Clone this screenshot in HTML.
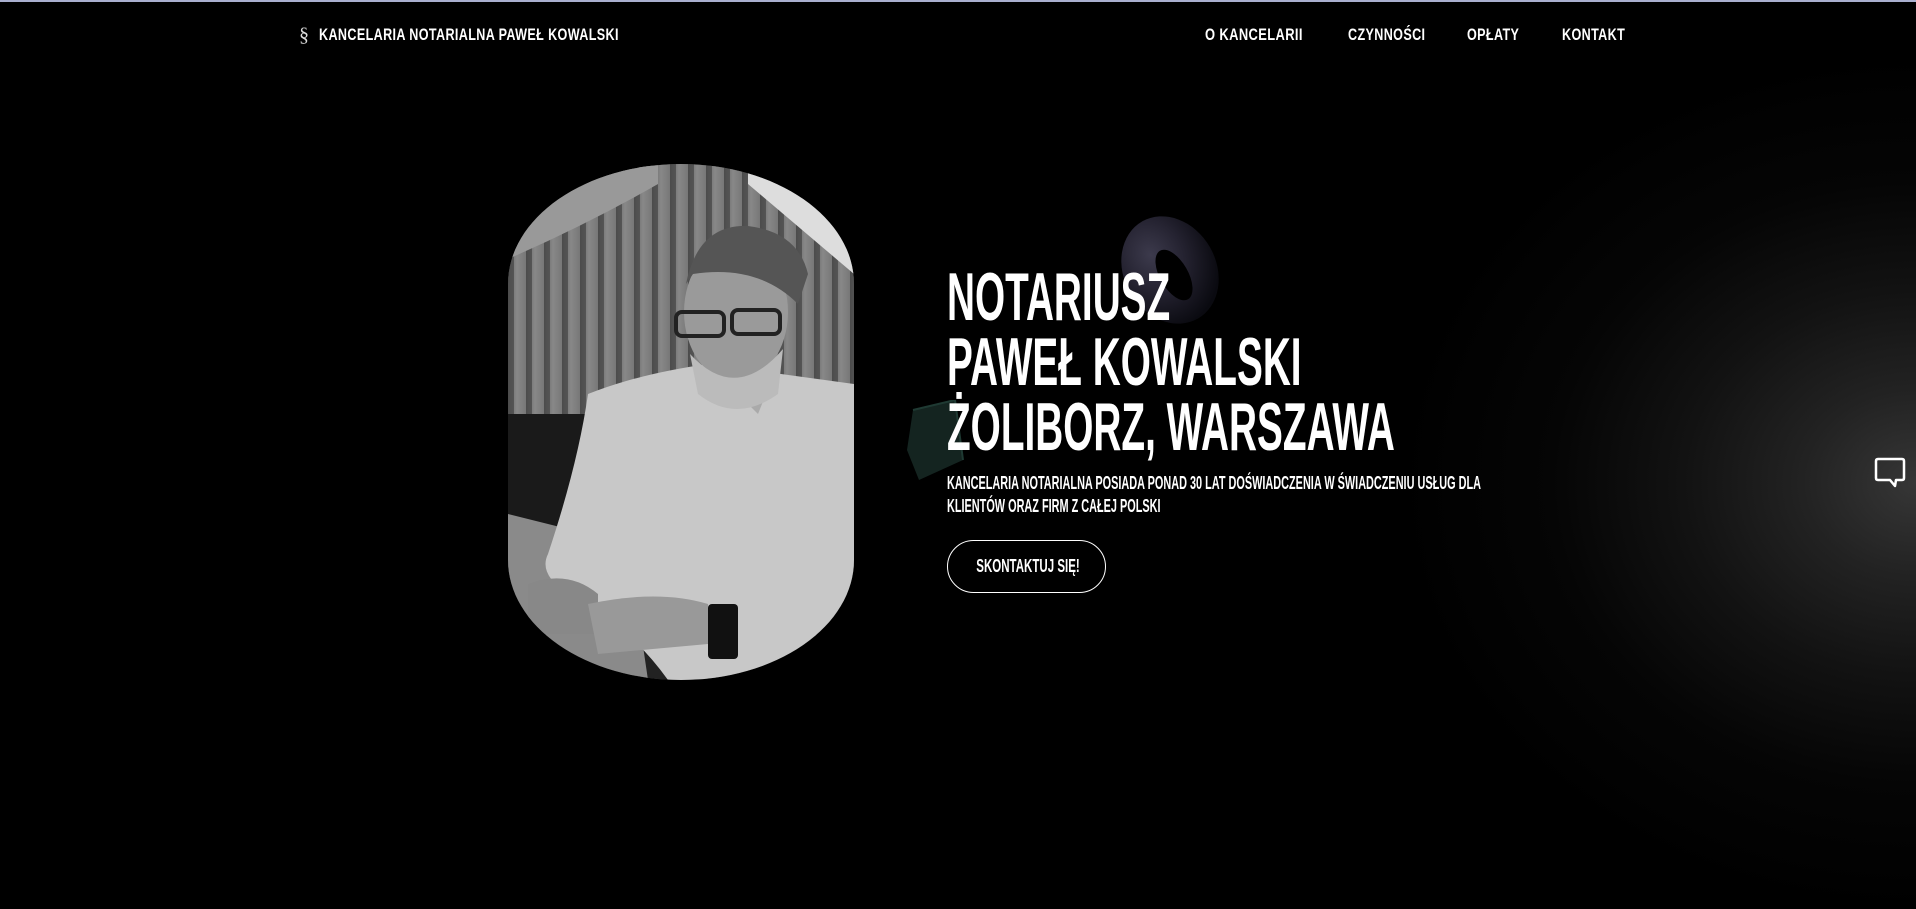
<!DOCTYPE html>
<html><head><meta charset="utf-8">
<style>
*{margin:0;padding:0;box-sizing:border-box}
html,body{width:1916px;height:909px;overflow:hidden;background:#000}
body{position:relative;font-family:"Liberation Sans Narrow","Liberation Sans",sans-serif;color:#fff}
.topline{position:absolute;left:0;top:0;width:1916px;height:2px;background:#a9afcf}
.glow{position:absolute;left:1400px;top:60px;width:1040px;height:850px;background:radial-gradient(ellipse 520px 430px at 516px 423px,#363636 0%,#222 22%,#121212 45%,#050505 70%,#000 100%)}
.n{position:absolute;white-space:nowrap;font-weight:bold;transform-origin:0 50%}
.logo{left:299px;top:24px;font-size:20px;font-family:"Liberation Serif",serif;font-weight:normal;color:#ddd}
.nav{top:25px;font-size:17px;letter-spacing:.5px}
.photo{position:absolute;left:508px;top:164px;width:346px;height:516px;border-radius:173px/120px;overflow:hidden;background:#555}
.title{position:absolute;left:947px;top:265px;font-size:68px;line-height:65px;font-weight:bold;transform:scaleX(.57);transform-origin:0 0;white-space:nowrap}
.para{position:absolute;left:947px;top:472px;font-size:18px;line-height:23px;font-weight:bold;transform:scaleX(.605);transform-origin:0 0;white-space:nowrap}
.btn{position:absolute;left:947px;top:540px;width:159px;height:53px;border:1.5px solid #fff;border-radius:27px}
.btn span{position:absolute;left:0;width:100%;top:15px;text-align:center;font-weight:bold;font-size:18px;transform:scaleX(.64);white-space:nowrap}
</style></head><body>
<div class="topline"></div>
<div class="glow"></div>
<div class="n logo">§</div>
<div class="n nav" style="left:319px;transform:scaleX(.74)">KANCELARIA NOTARIALNA PAWEŁ KOWALSKI</div>
<div class="n nav" style="left:1205px;transform:scaleX(.76)">O KANCELARII</div>
<div class="n nav" style="left:1348px;transform:scaleX(.74)">CZYNNOŚCI</div>
<div class="n nav" style="left:1467px;transform:scaleX(.74)">OPŁATY</div>
<div class="n nav" style="left:1562px;transform:scaleX(.74)">KONTAKT</div>

<svg style="position:absolute;left:1110px;top:215px" width="120" height="115" viewBox="0 0 120 115">
<defs><radialGradient id="tg" cx="40%" cy="30%" r="70%"><stop offset="0" stop-color="#3c3a4c"/><stop offset=".5" stop-color="#242230"/><stop offset="1" stop-color="#0a0a10"/></radialGradient></defs>
<ellipse cx="60" cy="55" rx="46" ry="56" transform="rotate(-30 60 55)" fill="url(#tg)"/>
<ellipse cx="64" cy="60" rx="14" ry="28" transform="rotate(-30 64 60)" fill="#000"/>
</svg>
<svg style="position:absolute;left:905px;top:400px" width="60" height="85"><path d="M8 10 L50 0 L58 60 L14 80 L2 50 Z" fill="#142420"/><path d="M8 10 L50 0 L58 60" fill="none" stroke="#1f3a33" stroke-width="2"/></svg>

<div class="photo">
<svg width="346" height="516" viewBox="0 0 346 516">
<defs>
<linearGradient id="cur" x1="0" x2="1"><stop offset="0" stop-color="#666"/><stop offset=".5" stop-color="#888"/><stop offset="1" stop-color="#777"/></linearGradient>
<pattern id="st" width="18" height="10" patternUnits="userSpaceOnUse"><rect width="18" height="10" fill="url(#cur)"/><rect x="0" width="6" height="10" fill="#3a3a3a" opacity=".6"/></pattern>
</defs>
<rect width="346" height="516" fill="#222"/>
<rect width="346" height="270" fill="url(#st)"/>
<path d="M0 30 Q80 0 150 0 L150 20 Q80 60 0 95Z" fill="#999"/>
<path d="M240 0 L346 60 L346 110 L240 20Z" fill="#ddd"/>
<rect x="0" y="250" width="180" height="130" fill="#1a1a1a"/>
<path d="M0 350 L120 380 L140 516 L0 516Z" fill="#8a8a8a"/>
<path d="M80 230 Q130 210 200 200 L346 220 L346 516 L160 516 Q120 460 60 430 Q30 410 40 390 Q70 300 80 230Z" fill="#c8c8c8"/>
<path d="M200 200 L250 250 L270 200Z" fill="#aaa"/>
<ellipse cx="228" cy="148" rx="52" ry="70" fill="#9a9a9a"/>
<path d="M178 120 Q190 60 240 62 Q290 68 300 110 L290 140 Q250 100 185 110Z" fill="#555"/>
<path d="M182 190 Q228 240 275 185 L270 230 Q228 260 190 230Z" fill="#bbb"/>
<rect x="168" y="148" width="48" height="24" rx="6" fill="none" stroke="#222" stroke-width="4"/>
<rect x="224" y="146" width="48" height="24" rx="6" fill="none" stroke="#222" stroke-width="4"/>
<path d="M20 420 Q60 405 90 430 L90 470 L20 470Z" fill="#888"/>
<path d="M80 440 Q150 425 200 440 L200 480 L90 490Z" fill="#999"/>
<rect x="200" y="440" width="30" height="55" rx="4" fill="#111"/>
</svg>
</div>

<div class="title">NOTARIUSZ<br>PAWEŁ KOWALSKI<br>ŻOLIBORZ, WARSZAWA</div>
<div class="para">KANCELARIA NOTARIALNA POSIADA PONAD 30 LAT DOŚWIADCZENIA W ŚWIADCZENIU USŁUG DLA<br>KLIENTÓW ORAZ FIRM Z CAŁEJ POLSKI</div>
<div class="btn"><span>SKONTAKTUJ SIĘ!</span></div>

<svg style="position:absolute;left:1874px;top:457px" width="32" height="33" viewBox="0 0 32 33">
<path d="M4 2 H28 Q30 2 30 4 V21 Q30 23 28 23 H22 L21 29 L16 23 H4 Q2 23 2 21 V4 Q2 2 4 2Z" fill="none" stroke="#fff" stroke-width="2.5" stroke-linejoin="round"/>
</svg>
</body></html>
